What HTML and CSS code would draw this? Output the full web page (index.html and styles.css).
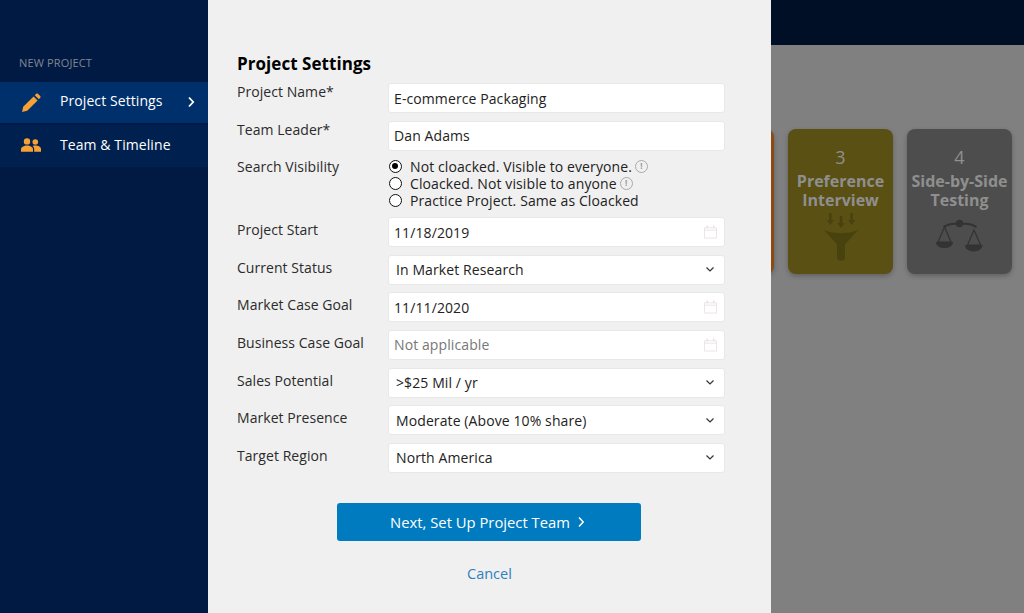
FILE: index.html
```html
<!DOCTYPE html>
<html lang="en">
<head>
<meta charset="utf-8">
<title>Project Settings</title>
<link rel="stylesheet" href="styles.css">
</head>
<body>
<div class="page">
  <aside class="sidebar">
    <div class="side-title">NEW PROJECT</div>
    <a class="side-item active">
      <svg class="side-icon" viewBox="0 0 20 20"><path fill="#f7a035" d="M1 19l1.2-5.2L12.6 3.4l4 4L6.2 17.8z"/><path fill="#f7a035" d="M13.8 2.2l1.4-1.4c.5-.5 1.2-.5 1.7 0l2.3 2.3c.5.5.5 1.2 0 1.7l-1.4 1.4z"/></svg>
      <span class="side-label">Project Settings</span>
      <svg class="side-chev" viewBox="0 0 8 12"><path d="M2 1.5L6.2 6 2 10.5" fill="none" stroke="#fff" stroke-width="1.8"/></svg>
    </a>
    <a class="side-item second">
      <svg class="side-icon people" viewBox="0 0 20 14"><circle cx="6" cy="3.4" r="3.2" fill="#f7a035"/><circle cx="14.3" cy="4" r="2.8" fill="#f7a035"/><path fill="#f7a035" d="M0 13.8v-2.3C0 9.3 2.7 7.6 6 7.6s6 1.7 6 3.9v2.3z"/><path fill="#f7a035" d="M13.2 13.8v-2.5c0-1.3-.6-2.4-1.6-3.3.8-.3 1.7-.4 2.7-.4 3.2 0 5.7 1.5 5.7 3.5v2.7z"/></svg>
      <span class="side-label">Team &amp; Timeline</span>
    </a>
  </aside>

  <main class="modal">
    <h1 class="modal-title">Project Settings</h1>
    <form class="form">
      <div class="row"><label class="lbl">Project Name*</label><div class="field"><span>E-commerce Packaging</span></div></div>
      <div class="row"><label class="lbl">Team Leader*</label><div class="field"><span>Dan Adams</span></div></div>
      <div class="row radios-row"><label class="lbl">Search Visibility</label>
        <div class="radios">
          <div class="radio-line"><span class="radio on"></span><span>Not cloacked. Visible to everyone.</span><span class="info">!</span></div>
          <div class="radio-line"><span class="radio"></span><span>Cloacked. Not visible to anyone</span><span class="info">!</span></div>
          <div class="radio-line"><span class="radio"></span><span>Practice Project. Same as Cloacked</span></div>
        </div>
      </div>
      <div class="row"><label class="lbl low">Project Start</label><div class="field date"><span>11/18/2019</span><svg class="cal" viewBox="0 0 14 14"><path fill="none" stroke="#e9e2e7" stroke-width="1" d="M.5 2.5h13v11H.5zM.5 5h13"/><path stroke="#e9e2e7" stroke-width="1.6" d="M3.5 0v3M10.5 0v3"/></svg></div></div>
      <div class="row"><label class="lbl low">Current Status</label><div class="field sel"><span>In Market Research</span><svg class="chev" viewBox="0 0 8 5"><path d="M.5.5L4 4 7.5.5" fill="none" stroke="#333" stroke-width="1.2"/></svg></div></div>
      <div class="row"><label class="lbl low">Market Case Goal</label><div class="field date"><span>11/11/2020</span><svg class="cal" viewBox="0 0 14 14"><path fill="none" stroke="#e9e2e7" stroke-width="1" d="M.5 2.5h13v11H.5zM.5 5h13"/><path stroke="#e9e2e7" stroke-width="1.6" d="M3.5 0v3M10.5 0v3"/></svg></div></div>
      <div class="row"><label class="lbl low">Business Case Goal</label><div class="field date"><span class="ph">Not applicable</span><svg class="cal" viewBox="0 0 14 14"><path fill="none" stroke="#e9e2e7" stroke-width="1" d="M.5 2.5h13v11H.5zM.5 5h13"/><path stroke="#e9e2e7" stroke-width="1.6" d="M3.5 0v3M10.5 0v3"/></svg></div></div>
      <div class="row"><label class="lbl low">Sales Potential</label><div class="field sel"><span>&gt;$25 Mil / yr</span><svg class="chev" viewBox="0 0 8 5"><path d="M.5.5L4 4 7.5.5" fill="none" stroke="#333" stroke-width="1.2"/></svg></div></div>
      <div class="row"><label class="lbl low">Market Presence</label><div class="field sel"><span>Moderate (Above 10% share)</span><svg class="chev" viewBox="0 0 8 5"><path d="M.5.5L4 4 7.5.5" fill="none" stroke="#333" stroke-width="1.2"/></svg></div></div>
      <div class="row"><label class="lbl low">Target Region</label><div class="field sel"><span>North America</span><svg class="chev" viewBox="0 0 8 5"><path d="M.5.5L4 4 7.5.5" fill="none" stroke="#333" stroke-width="1.2"/></svg></div></div>
    </form>
    <button class="next" type="button">Next, Set Up Project Team<svg class="next-chev" viewBox="0 0 8 12"><path d="M2 1.5L6.2 6 2 10.5" fill="none" stroke="#fff" stroke-width="1.5"/></svg></button>
    <a class="cancel">Cancel</a>
  </main>

  <section class="back">
    <div class="topbar"></div>
    <div class="cards">
      <div class="card orange"></div>
      <div class="card olive">
        <div class="num">3</div>
        <div class="name">Preference Interview</div>
        <svg class="art funnel" viewBox="0 0 36 48"><g fill="#48420f"><path d="M6 0h2.600v7H11l-3.700 5-3.700-5H6zM16.700 3h2.600v7h2.400L18 15l-3.700-5h2.400zM27.400 0H30v7h2.400l-3.700 5-3.700-5h2.400z"/><path d="M0 16c4 3 10 4 18 4s14-1 18-4l-14 15.500V45c0 3.500-8 3.500-8 0V31.500z"/></g></svg>
      </div>
      <div class="card grey">
        <div class="num">4</div>
        <div class="name">Side-by-Side Testing</div>
        <svg class="art scale" viewBox="0 0 47 34"><g fill="#333"><circle cx="23.500" cy="4.500" r="3.700"/><path d="M7 7c5-3 10-4 15-3v1.800C17 5.300 13 6 8 9zM40 9c-5-3-9-3.700-14-3.200V4c5-1 10 0 15 3z"/><path d="M0 23h17c0 8-17 8-17 0zM29 26h17.500c0 8.500-17.500 8.500-17.500 0z"/></g><path d="M8.500 8L2 23h13zM38 11l-6.500 15h13z" fill="none" stroke="#333" stroke-width="1.200"/></svg>
      </div>
    </div>
  </section>
</div>
</body>
</html>
```

FILE: styles.css
```css
* { box-sizing: border-box; }
html, body { margin: 0; padding: 0; height: 100%; }
body { font-family: "Open Sans", sans-serif; overflow: hidden; background: #808080; }
.page { display: flex; width: 1024px; height: 613px; overflow: hidden; }

.sidebar { width: 208px; flex: none; background: #001a44; padding-top: 56px; }
.side-title { font-size: 11px; line-height: 14px; color: #808690; padding-left: 19px; margin-bottom: 12px; letter-spacing: .15px; }
.side-item { display: flex; align-items: center; height: 41px; color: #fff; font-size: 14px; letter-spacing: .08px; }
.side-item.active { background: #00306b; margin-bottom: 2px; }
.side-item.second { background: #00214f; height: 42px; }
.side-icon { width: 20px; height: 20px; margin-left: 21px; flex: none; }
.side-icon.people { height: 14px; margin-top: -2px; }
.side-label { margin-left: 19px; flex: 1; margin-bottom: 4px; }
.side-chev { width: 8px; height: 12px; margin-right: 13px; margin-bottom: 2px; }

.modal { width: 563px; flex: none; background: #f0f0f0; padding: 52px 46px 0 29px; z-index: 2; position: relative; display: flex; flex-direction: column; }
.modal-title { margin: 0 0 8px; font-size: 17px; line-height: 23px; font-weight: 700; color: #000; letter-spacing: .05px; }
.form { display: flex; flex-direction: column; gap: 7.65px; }
.row { display: flex; height: 30px; font-size: 14px; color: #222; letter-spacing: .1px; }
.lbl { width: 151px; flex: none; line-height: 18px; color: #2b2b2b; letter-spacing: .05px; }
.lbl.low { padding-top: 4px; }
.field { flex: 1; background: #fff; border-radius: 3px; border: 1px solid #e8e8e8; display: flex; align-items: center; padding: 0 7px 0 5px; justify-content: space-between; color: #222; }
.field.sel { padding: 0 10px 0 7px; }
.ph { color: #777; }
.cal { width: 13px; height: 14px; }
.chev { width: 8px; height: 5px; }
.radios-row { height: 51.1px; }
.radios { display: flex; flex-direction: column; }
.radio-line { display: flex; align-items: center; height: 17px; gap: 8px; margin-left: 1px; line-height: 17px; white-space: nowrap; }
.radio { width: 13px; height: 13px; border: 1.7px solid #111; border-radius: 50%; background: #fff; flex: none; position: relative; }
.radio.on::after { content: ""; position: absolute; left: 1.8px; top: 1.8px; width: 6px; height: 6px; border-radius: 50%; background: #000; }
.info { width: 13px; height: 13px; border: 1.5px solid #aaa; border-radius: 50%; font-size: 8px; font-weight: 700; line-height: 10px; text-align: center; color: #999; margin-left: -5px; flex: none; }

.next { align-self: flex-start; margin: 30px 0 0 100px; padding: 0 3px 0 0; width: 304px; height: 38px; border: 0; border-radius: 3px; background: #007bbf; color: #fff; font: 400 14.8px "Open Sans", sans-serif; display: flex; align-items: center; justify-content: center; gap: 7px; }
.next-chev { width: 8px; height: 12px; }
.cancel { align-self: flex-start; margin: 23px 0 0 230px; font-size: 14.5px; line-height: 19px; color: #2f80bd; }

.back { flex: 1; min-width: 0; background: #808080; }
.topbar { height: 45px; background: #000f26; }
.cards { display: flex; justify-content: flex-end; gap: 14px; margin-top: 84px; padding-right: 12px; }
.card { width: 105px; height: 145px; flex: none; border-radius: 8px; box-shadow: 0 2px 5px rgba(0,0,0,.25); display: flex; flex-direction: column; align-items: center; padding-top: 18px; text-align: center; color: #8f8f8f; }
.orange { background: #8a4a12; }
.olive { background: #5a5014; }
.grey { background: #4d4d4d; }
.num { font-size: 18px; line-height: 20px; font-weight: 400; }
.name { font-size: 16px; line-height: 19px; font-weight: 700; margin-top: 5px; }
.art { margin-top: 3px; }
.funnel { width: 36px; height: 48px; }
.scale { width: 47px; height: 34px; margin-top: 9px; }
```
